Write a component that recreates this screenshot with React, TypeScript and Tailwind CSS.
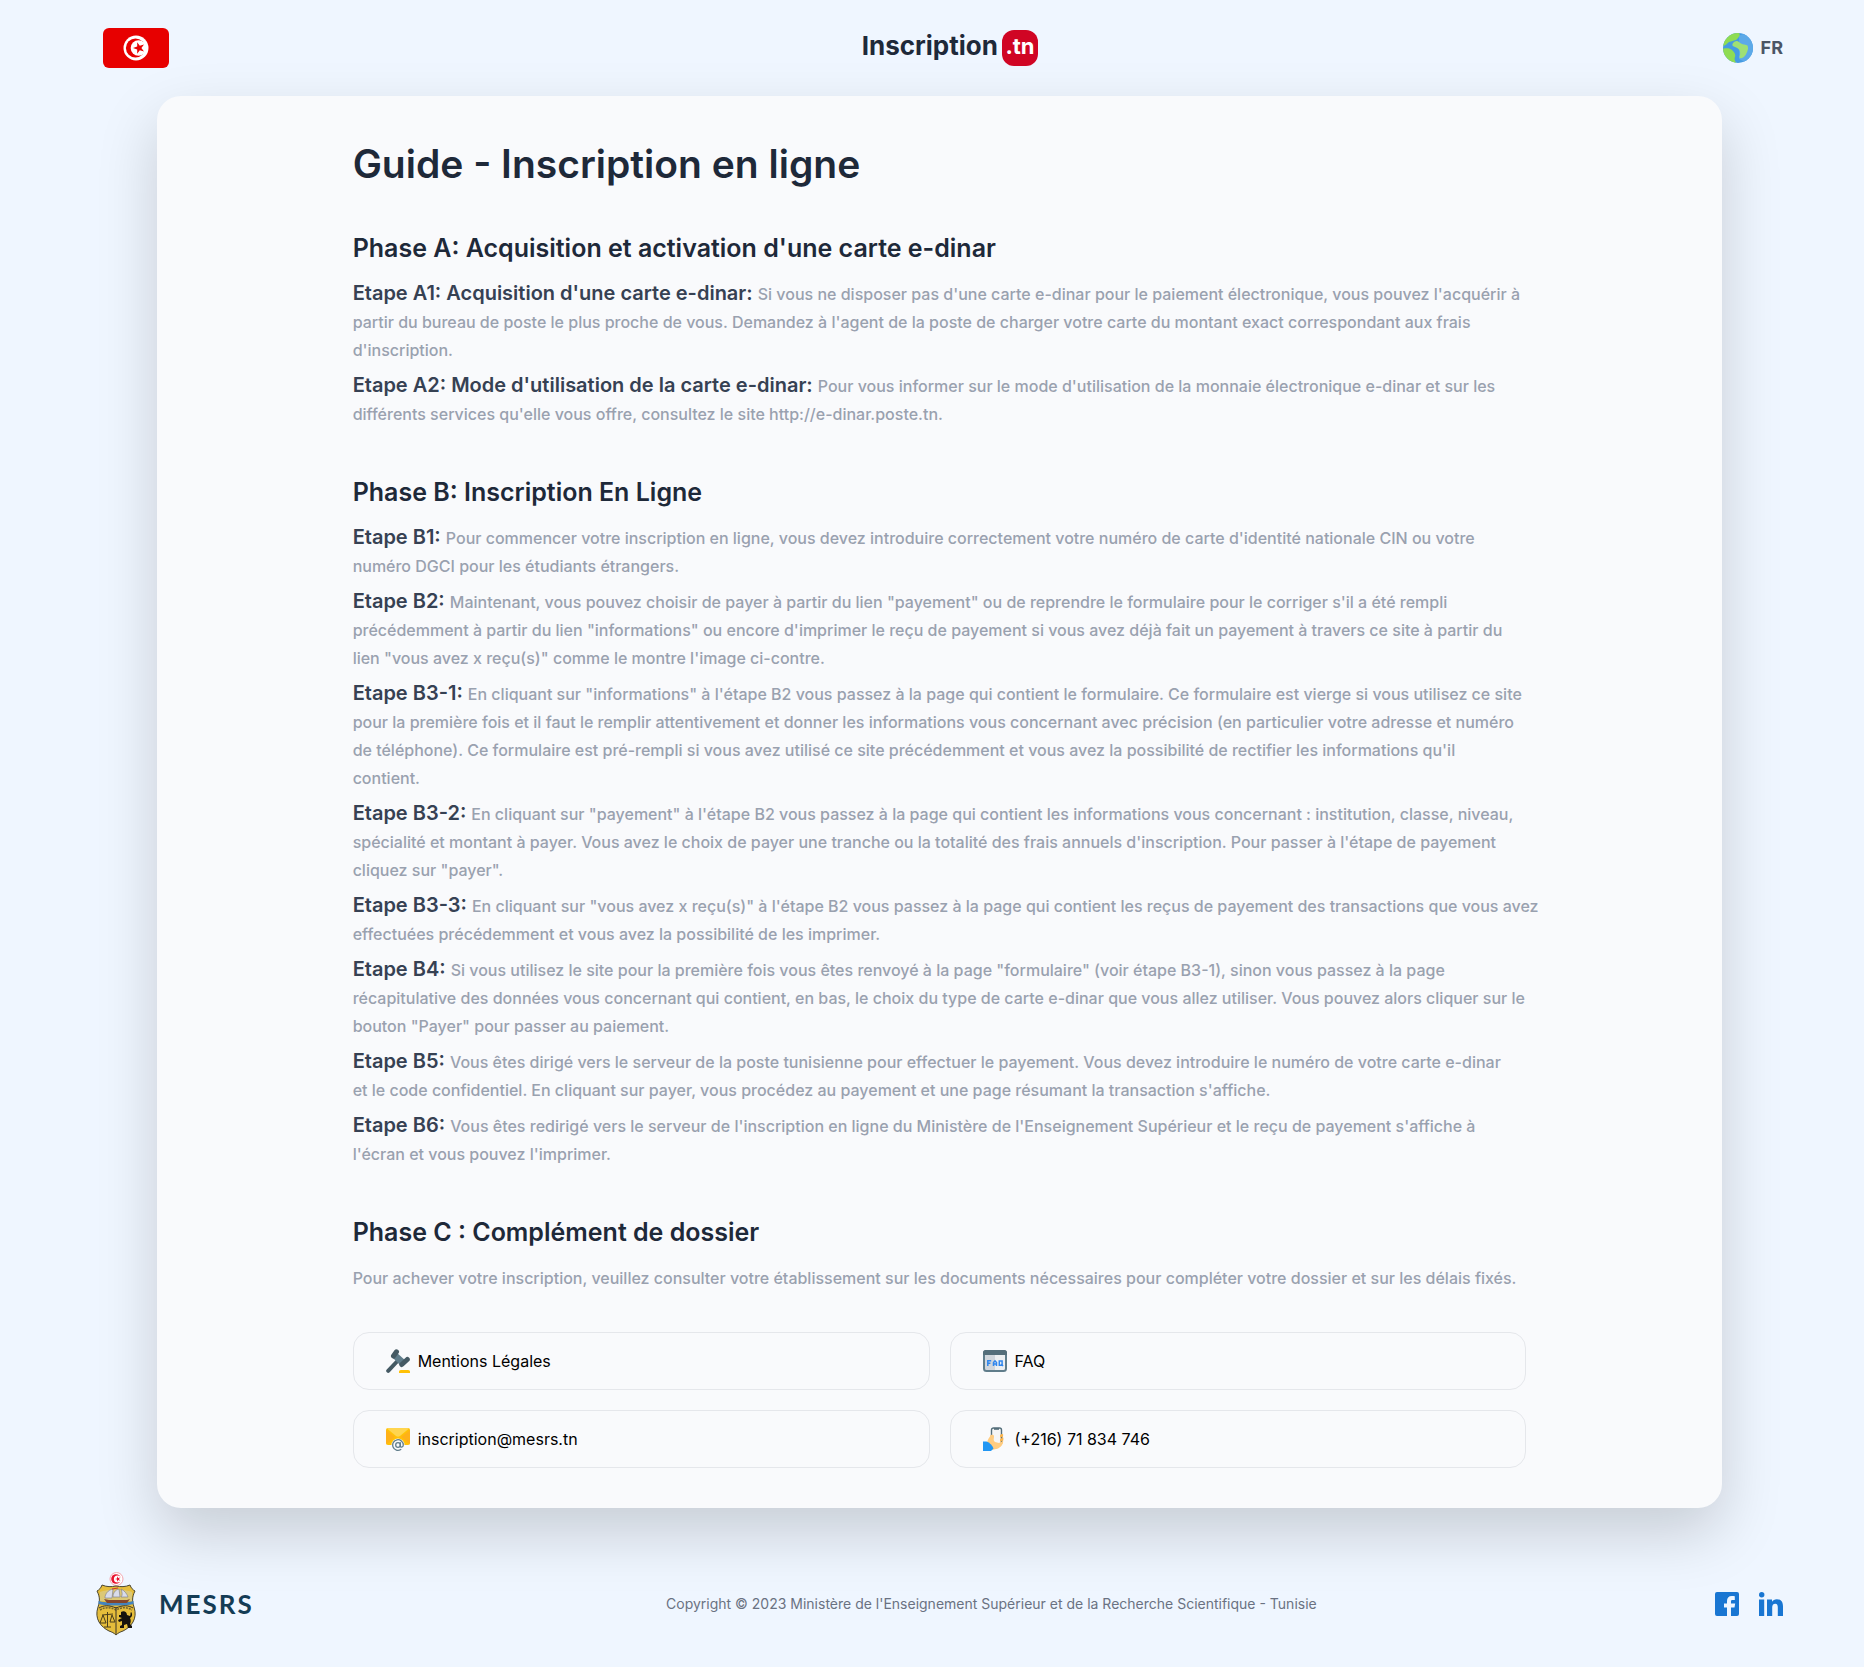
import { Fragment, type ReactNode } from "react";

type Step = { title: string; lines: string[] };

const phaseA: Step[] = [
  {
    title: "Etape A1: Acquisition d'une carte e-dinar:",
    lines: [
      "Si vous ne disposer pas d'une carte e-dinar pour le paiement électronique, vous pouvez l'acquérir à",
      "partir du bureau de poste le plus proche de vous. Demandez à l'agent de la poste de charger votre carte du montant exact correspondant aux frais",
      "d'inscription.",
    ],
  },
  {
    title: "Etape A2: Mode d'utilisation de la carte e-dinar:",
    lines: [
      "Pour vous informer sur le mode d'utilisation de la monnaie électronique e-dinar et sur les",
      "différents services qu'elle vous offre, consultez le site http://e-dinar.poste.tn.",
    ],
  },
];

const phaseB: Step[] = [
  {
    title: "Etape B1:",
    lines: [
      "Pour commencer votre inscription en ligne, vous devez introduire correctement votre numéro de carte d'identité nationale CIN ou votre",
      "numéro DGCI pour les étudiants étrangers.",
    ],
  },
  {
    title: "Etape B2:",
    lines: [
      "Maintenant, vous pouvez choisir de payer à partir du lien \"payement\" ou de reprendre le formulaire pour le corriger s'il a été rempli",
      "précédemment à partir du lien \"informations\" ou encore d'imprimer le reçu de payement si vous avez déjà fait un payement à travers ce site à partir du",
      "lien \"vous avez x reçu(s)\" comme le montre l'image ci-contre.",
    ],
  },
  {
    title: "Etape B3-1:",
    lines: [
      "En cliquant sur \"informations\" à l'étape B2 vous passez à la page qui contient le formulaire. Ce formulaire est vierge si vous utilisez ce site",
      "pour la première fois et il faut le remplir attentivement et donner les informations vous concernant avec précision (en particulier votre adresse et numéro",
      "de téléphone). Ce formulaire est pré-rempli si vous avez utilisé ce site précédemment et vous avez la possibilité de rectifier les informations qu'il",
      "contient.",
    ],
  },
  {
    title: "Etape B3-2:",
    lines: [
      "En cliquant sur \"payement\" à l'étape B2 vous passez à la page qui contient les informations vous concernant : institution, classe, niveau,",
      "spécialité et montant à payer. Vous avez le choix de payer une tranche ou la totalité des frais annuels d'inscription. Pour passer à l'étape de payement",
      "cliquez sur \"payer\".",
    ],
  },
  {
    title: "Etape B3-3:",
    lines: [
      "En cliquant sur \"vous avez x reçu(s)\" à l'étape B2 vous passez à la page qui contient les reçus de payement des transactions que vous avez",
      "effectuées précédemment et vous avez la possibilité de les imprimer.",
    ],
  },
  {
    title: "Etape B4:",
    lines: [
      "Si vous utilisez le site pour la première fois vous êtes renvoyé à la page \"formulaire\" (voir étape B3-1), sinon vous passez à la page",
      "récapitulative des données vous concernant qui contient, en bas, le choix du type de carte e-dinar que vous allez utiliser. Vous pouvez alors cliquer sur le",
      "bouton \"Payer\" pour passer au paiement.",
    ],
  },
  {
    title: "Etape B5:",
    lines: [
      "Vous êtes dirigé vers le serveur de la poste tunisienne pour effectuer le payement. Vous devez introduire le numéro de votre carte e-dinar",
      "et le code confidentiel. En cliquant sur payer, vous procédez au payement et une page résumant la transaction s'affiche.",
    ],
  },
  {
    title: "Etape B6:",
    lines: [
      "Vous êtes redirigé vers le serveur de l'inscription en ligne du Ministère de l'Enseignement Supérieur et le reçu de payement s'affiche à",
      "l'écran et vous pouvez l'imprimer.",
    ],
  },
];

function Flag() {
  return (
    <svg viewBox="0 0 66 40" className="h-10 w-[66px]" aria-hidden="true">
      <rect width="66" height="40" rx="6" fill="#e70000" />
      <circle cx="33" cy="20" r="12.5" fill="#fff" />
      <circle cx="32.5" cy="20" r="9.6" fill="#e70000" />
      <circle cx="35.500" cy="20" r="7.800" fill="#fff" />
      <path
        fill="#e70000"
        d="M30 20l4.200-1.400v-4.400l2.600 3.500 4.200-1.300-2.600 3.600 2.600 3.600-4.200-1.300-2.600 3.500v-4.400z"
      />
    </svg>
  );
}

function Globe() {
  return (
    <svg viewBox="0 0 30 30" className="size-[30px]" aria-hidden="true">
      <clipPath id="globe">
        <circle cx="15" cy="15" r="15" />
      </clipPath>
      <g clipPath="url(#globe)">
        <rect width="30" height="30" fill="#459be2" />
        <path fill="#8fdc52" d="M-1 13c4 0 5-3 7-4 3-1 4-1 7-2 2-1 2-3 4-4L16-1-1 1z" />
        <path fill="#5ca9e8" d="M16 3c4-3 9-3 14 3v18l-6 6-8-4V9z" />
        <path
          fill="#8fdc52"
          d="M-1 16c4-1 8-1 10 1s4 4 3 7c-1 2 0 4 2 7H4L-2 24z"
        />
        <path
          fill="#9fe074"
          d="M10 10c2-2 4-3 6-1 3 3 5 2 7 3 2 0 2 2 2 4-1 4-3 8-6 9-3 1-3-1-2-3 1-5-2-7-5-8s-3-2-2-4z"
        />
      </g>
    </svg>
  );
}

function Gavel() {
  return (
    <svg viewBox="0 0 24 24" className="size-6 shrink-0" aria-hidden="true">
      <path stroke="#455a64" strokeWidth="4" strokeLinecap="round" d="M2.200 21.800L11 12.500" />
      <path fill="#607d8b" d="M10.500 3.500l9.500 8.500-5 5-8.500-8.500z" />
      <path stroke="#455a64" strokeWidth="5" strokeLinecap="round" d="M7.500 7l3-4.200M15.800 15.500l5.500-5" />
      <path fill="#ffc107" d="M13 24v-1.200c0-1 .8-1.800 1.800-1.800h7.400c1 0 1.800.8 1.800 1.800V24z" />
    </svg>
  );
}

function FaqWindow() {
  return (
    <svg viewBox="0 0 24 24" className="size-6 shrink-0" aria-hidden="true">
      <rect x="1" y="2" width="22" height="20" rx="2.500" fill="#eceff1" />
      <path fill="#d0d6dc" d="M1 5h11v17H3c-1 0-2-1-2-2z" />
      <rect x="1" y="2" width="22" height="20" rx="2.500" fill="none" stroke="#607d8b" strokeWidth="2" />
      <path fill="#546e7a" d="M0 6V3.500C0 2 1 1 2.500 1h19C23 1 24 2 24 3.500V6z" />
      <path
        fill="none"
        stroke="#2f86ee"
        strokeWidth="1.500"
        d="M4.800 17v-5.200h3.400M4.800 14.300h2.600M10.500 17v-3.500l1.500-1.700 1.500 1.700V17M10.500 15h3M16.300 12h2.800v4.200h-2.800zM18.300 15l1.700 2"
      />
    </svg>
  );
}

function MailAt() {
  return (
    <svg viewBox="0 0 24 24" className="size-6 shrink-0" aria-hidden="true">
      <rect y="1" width="24" height="17" rx="2" fill="#ffc107" />
      <path fill="#ffa726" d="M0 3l9 7-9 7.500zM24 3l-9 7 9 7.500z" opacity=".6" />
      <path fill="#ffd54f" d="M1 1.500C1.500 1 2 1 2.500 1h19c.5 0 1 0 1.500.5L14 9c-1.300 1-2.700 1-4 0z" />
      <circle cx="12" cy="18" r="6.500" fill="#f9fafc" />
      <circle cx="12" cy="18" r="2.300" fill="none" stroke="#607d8b" strokeWidth="1.300" />
      <path
        fill="none"
        stroke="#607d8b"
        strokeWidth="1.300"
        strokeLinecap="round"
        d="M14.300 15.700V19c0 1.600 3 1.500 3-1a5.300 5.300 0 1 0-2.500 4.500"
      />
    </svg>
  );
}

function PhoneHand() {
  return (
    <svg viewBox="0 0 24 24" className="size-6 shrink-0" aria-hidden="true">
      <path fill="#ffcc80" d="M4 16c1-5 3-6 5-9l3-3 7 4c2 1 2 8-1 11l-5 3-4 1z" />
      <rect x="8.500" y="1" width="10" height="16" rx="2" fill="#f5f5f5" stroke="#546e7a" strokeWidth="1.400" />
      <path fill="#546e7a" d="M11 1h5v1.800h-5z" />
      <path fill="#ffcc80" d="M7 9c1-2 4-1 4 0 0 3-1 4 1 6l4 1 4-2c1 3-4 8-7 8l-6-3z" />
      <path fill="#ffb74d" d="M17 8c2-2 4-1 3 1l-3 2zM17 12c3-2 4-1 3 1l-3 2z" />
      <path fill="#2196f3" d="M0 14.500h3.500c3 1 6 4 7 7L8 24H0z" />
    </svg>
  );
}

function Emblem() {
  return (
    <svg viewBox="0 0 42 64" className="h-16 w-[42px]" aria-hidden="true">
      <circle cx="21.500" cy="7" r="6.500" fill="#fff" stroke="#f3a6ae" strokeWidth="1" />
      <circle cx="21" cy="7" r="4.800" fill="#e8112d" />
      <circle cx="22.500" cy="7" r="3.600" fill="#fff" />
      <path fill="#e8112d" d="M20 7l2-.6V4.300L23.200 6l2-.6L24 7l1.200 1.700-2-.7L22 9.700V7.600z" />
      <path
        fill="#e5bd3b"
        stroke="#4b4630"
        strokeWidth="1"
        d="M7 13c5 2 9 2 14 1 5 1 9 1 14-1 1 3 3 5 5 6-3 6-3 10-1 16 4 12-3 20-11 24-3 1-5 2-7 4-2-2-4-3-7-4C6 55-1 47 3 35c2-6 2-10-1-16 2-1 4-3 5-6z"
      />
      <path fill="#d5cf9f" d="M5 20c7-3 25-3 32 0v9H5z" opacity=".6" />
      <path fill="#4483bd" d="M3.500 29c8 2 27 2 35 0v3c-8 2-27 2-35 0z" />
      <path fill="#d9dcea" stroke="#77798c" strokeWidth=".6" d="M10 26c0-4 3-8 8-9l-1 9zM18 25c0-4 2-7 6-8l1 8zM26 25c2-2 1-5 0-8 4 2 6 5 7 8z" />
      <path fill="#86452b" d="M9 27l5 1h18l3-1-3 4H12z" />
      <path stroke="#c9332b" strokeWidth="1" d="M17 17l6-1" />
      <path fill="none" stroke="#3b3528" strokeWidth="1" d="M4 36c5-3 10-3 17 0 7-3 12-3 17 0" />
      <path fill="none" stroke="#77652a" strokeWidth="1.500" strokeDasharray="2 1" d="M5 38c5-3 10-3 16 0 6-3 11-3 16 0" />
      <path stroke="#3b3528" strokeWidth="1" d="M21 35v27" />
      <path fill="none" stroke="#4b3f1c" strokeWidth="1" d="M12.500 40v15M7 43l11-1M8 43l-3 8h6zM17 43l-2 7h5zM9 55h7" />
      <path
        fill="#16130e"
        d="M26 40c3-2 6 0 6 3l3 1c1-1 0-3 1-4 2 2 1 5-1 6 1 2 1 4 0 6l2 2v2h-4l-1-4-3 1v3h-4v-2l2-1v-4l-3 1-1-2 4-2-3-1v-2l2 0z"
      />
    </svg>
  );
}

function FacebookIcon() {
  return (
    <svg viewBox="0 0 24 24" className="size-6" aria-hidden="true">
      <path
        fill="#1976d2"
        d="M2 0h20a2 2 0 0 1 2 2v20a2 2 0 0 1-2 2h-6v-8.500h3.500l.7-4H16V9.300C16 8.200 16.600 8 17.600 8h2.200V4.300c-.8-.2-1.800-.3-3-.3-3.300 0-4.800 2-4.800 5v2.500H9v4h3V24H2a2 2 0 0 1-2-2V2a2 2 0 0 1 2-2z"
      />
    </svg>
  );
}

function LinkedinIcon() {
  return (
    <svg viewBox="0 0 24 24" className="size-6" aria-hidden="true">
      <g fill="#1976d2">
        <circle cx="2.700" cy="2.700" r="2.700" />
        <path d="M0 7.500h5.200V24H0zM8 7.500h5v2.200c1-1.600 2.600-2.500 4.800-2.500 4.400 0 6.200 2.700 6.200 7.300V24h-5.200v-8.600c0-2.200-.6-3.700-2.500-3.700-2.200 0-3.100 1.600-3.100 3.800V24H8z" />
      </g>
    </svg>
  );
}

function Phase({ title, children }: { title: string; children: ReactNode }) {
  return (
    <section className="mt-12">
      <h2 className="mb-4 text-[25px] leading-8 font-semibold text-gray-800">{title}</h2>
      {children}
    </section>
  );
}

function Steps({ steps }: { steps: Step[] }) {
  return (
    <div className="flex flex-col gap-2">
      {steps.map((step) => (
        <p key={step.title} className="text-base leading-7 font-[450] text-gray-400 2xl:whitespace-nowrap">
          <strong className="text-xl leading-none font-semibold text-gray-700">{step.title} </strong>
          {step.lines.map((line, i) => (
            <Fragment key={line}>
              {i > 0 && " "}
              {i > 0 && <br className="hidden 2xl:inline" />}
              {line}
            </Fragment>
          ))}
        </p>
      ))}
    </div>
  );
}

function LinkCard({ href, icon, label }: { href: string; icon: ReactNode; label: string }) {
  return (
    <a
      href={href}
      className="flex h-[58px] items-center gap-2 rounded-2xl border border-gray-200 px-8 text-base text-black"
    >
      {icon}
      {label}
    </a>
  );
}

export default function App() {
  return (
    <div className="min-h-screen bg-blue-50 font-['Inter',sans-serif]">
      <header className="flex h-24 items-center justify-between px-[81px]">
        <a href="#tunisie" aria-label="Tunisie" className="flex w-24 justify-center pl-3.5">
          <Flag />
        </a>
        <a href="#accueil" className="flex items-center gap-1 text-[26px] leading-8 font-bold text-gray-800">
          <span className="pb-1">Inscription</span>
          <span className="flex size-9 items-center justify-center rounded-xl bg-[#d00524] pb-1 text-[22px] text-white">
            .tn
          </span>
        </a>
        <button type="button" className="flex items-center gap-2 text-lg font-bold text-gray-600">
          <Globe />
          FR
        </button>
      </header>

      <main className="mr-[142px] ml-[157px] rounded-3xl bg-[#f9fafc] pt-12 pb-10 shadow-[0_25px_60px_rgba(0,0,0,0.17)]">
        <div className="mx-auto w-3/4">
          <h1 className="text-[39px] leading-10 font-semibold text-gray-800">Guide - Inscription en ligne</h1>
          <Phase title="Phase A: Acquisition et activation d'une carte e-dinar">
            <Steps steps={phaseA} />
          </Phase>
          <Phase title="Phase B: Inscription En Ligne">
            <Steps steps={phaseB} />
          </Phase>
          <Phase title="Phase C : Complément de dossier">
            <p className="text-base leading-7 font-[450] text-gray-400">
              Pour achever votre inscription, veuillez consulter votre établissement sur les documents nécessaires pour
              compléter votre dossier et sur les délais fixés.
            </p>
          </Phase>
          <nav className="mt-10 grid grid-cols-2 gap-5">
            <LinkCard href="#mentions" icon={<Gavel />} label="Mentions Légales" />
            <LinkCard href="#faq" icon={<FaqWindow />} label="FAQ" />
            <LinkCard href="mailto:inscription@mesrs.tn" icon={<MailAt />} label="inscription@mesrs.tn" />
            <LinkCard href="tel:+21671834746" icon={<PhoneHand />} label="(+216) 71 834 746" />
          </nav>
        </div>
      </main>

      <footer className="flex items-center justify-between px-[81px] pt-16 pb-7">
        <a
          href="#mesrs"
          className="flex items-center gap-[22px] px-3.5 font-['Lato',sans-serif] text-[26px] leading-8 font-bold tracking-[2px] text-[#143c55]"
        >
          <Emblem />
          MESRS
        </a>
        <p className="text-sm text-gray-500">
          Copyright © 2023 Ministère de l'Enseignement Supérieur et de la Recherche Scientifique - Tunisie
        </p>
        <div className="flex gap-5">
          <a href="#facebook" aria-label="Facebook">
            <FacebookIcon />
          </a>
          <a href="#linkedin" aria-label="LinkedIn">
            <LinkedinIcon />
          </a>
        </div>
      </footer>
    </div>
  );
}
